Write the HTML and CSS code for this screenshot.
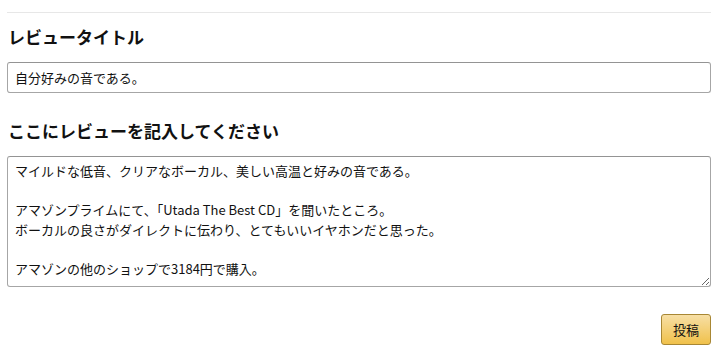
FILE: index.html
```html
<!DOCTYPE html>
<html lang="ja">
<head>
<meta charset="UTF-8"><meta name="viewport" content="width=device-width, initial-scale=1">
<title>レビューを書く</title>
<link rel="stylesheet" href="styles.css">
</head>
<body>
  <div class="review">
    <h2 class="label">レビュータイトル</h2>
    <input type="text" class="field" value="自分好みの音である。">

    <h2 class="label second">ここにレビューを記入してください</h2>
    <textarea class="field area">マイルドな低音、クリアなボーカル、美しい高温と好みの音である。

アマゾンプライムにて、「Utada The Best CD」を聞いたところ。
ボーカルの良さがダイレクトに伝わり、とてもいいイヤホンだと思った。

アマゾンの他のショップで3184円で購入。</textarea>

    <div class="actions">
      <button class="btn">投稿</button>
    </div>
  </div>
</body>
</html>
```

FILE: styles.css
```css
body{margin:0;background:#fff;color:#111;font-family:"Noto Sans CJK JP","Noto Sans",sans-serif}
.review{margin:12px 11px 0 7px;border-top:1px solid #e7e7e7;padding-top:14px}
.label{font-size:17px;font-weight:700;margin:0 0 15px 1px;line-height:20px}
.label.second{margin-top:28px}
.field{display:block;box-sizing:border-box;width:100%;height:31px;padding:3px 7px;border:1px solid #a6a6a6;border-top-color:#949494;border-radius:3px;font-family:inherit;font-size:13px;color:#111;background:#fff;outline:none}
.area{height:131px;padding:4px 7px;line-height:19.5px;resize:vertical}
.actions{display:flex;justify-content:flex-end;margin-top:27px}
.btn{height:31px;padding:0 11px;border:1px solid #a88734;border-radius:3px;background:linear-gradient(#f7dfa5,#f0c14b);font-family:inherit;font-size:13px;color:#111;cursor:pointer}
```
